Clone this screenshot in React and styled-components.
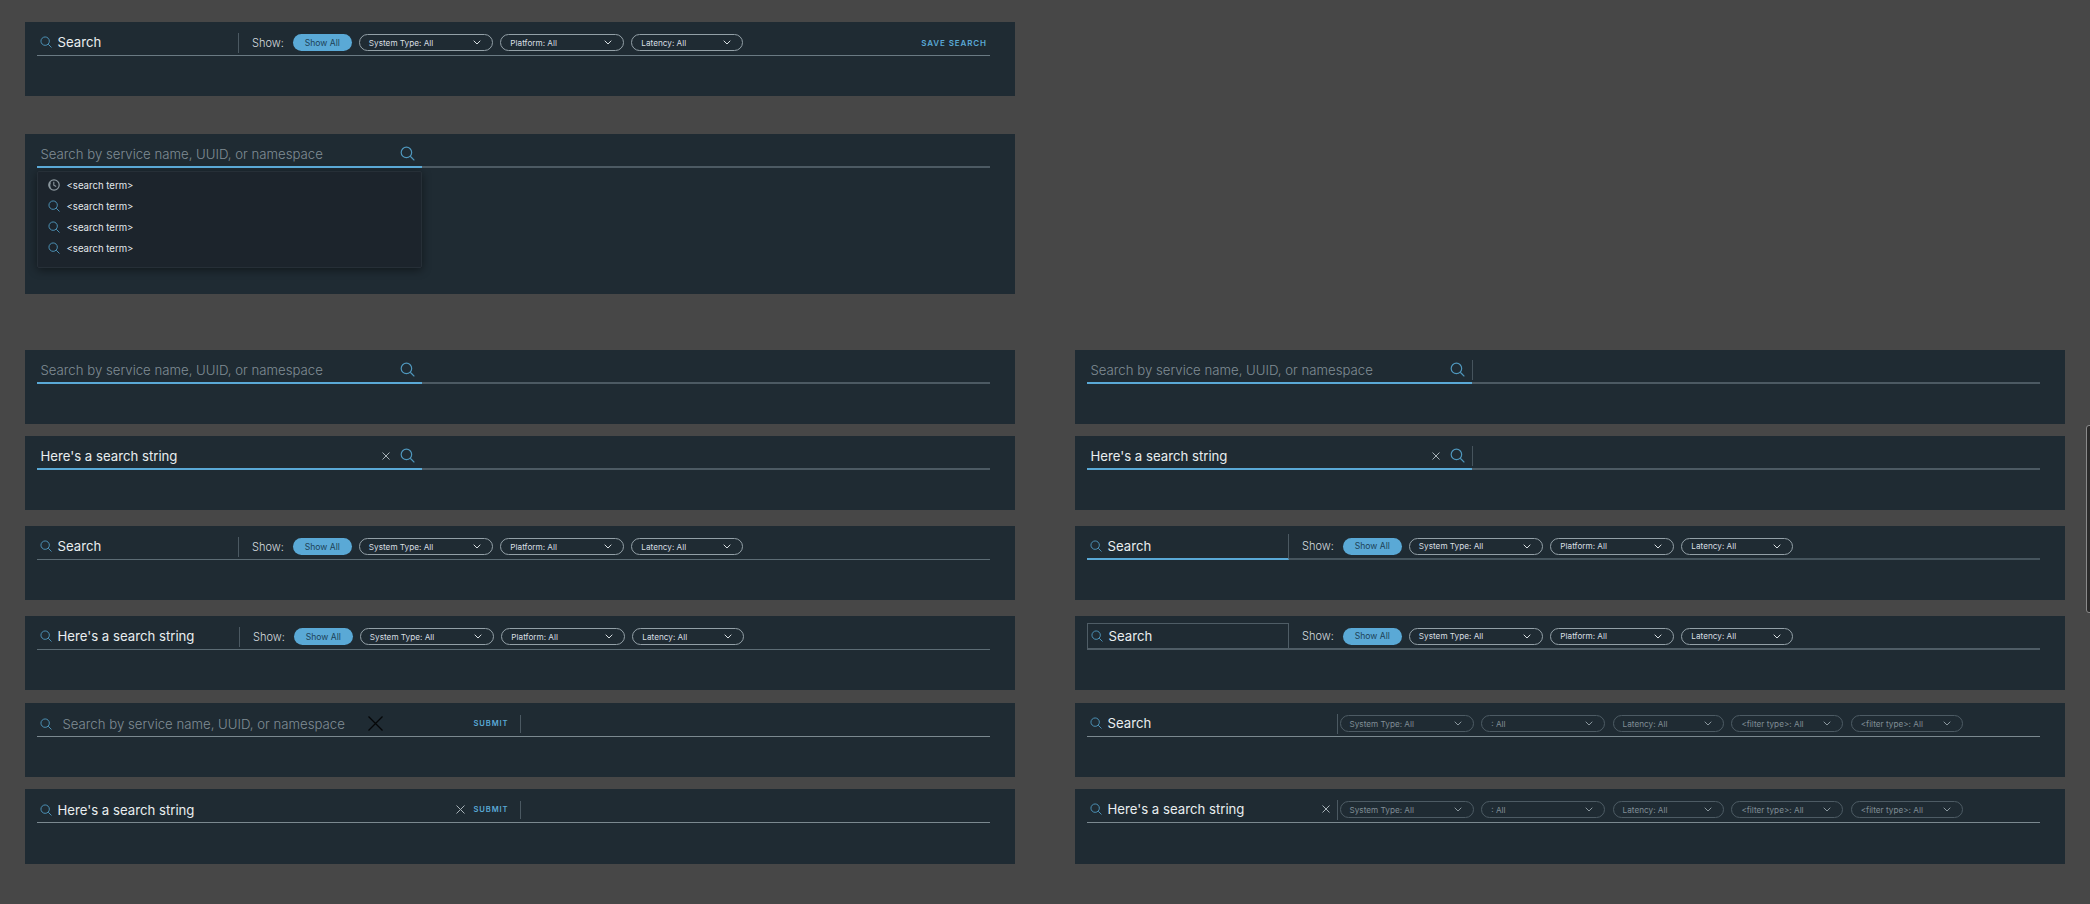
import React from "react";
import styled, { createGlobalStyle } from "styled-components";

const FONT = `Inter, "Liberation Sans", sans-serif`;
const BLUE = "#5aa9d6";
const ICON_BLUE = "#4f97bd";

const GlobalStyle = createGlobalStyle`
  html, body {
    margin: 0;
    padding: 0;
    background: #474747;
    overflow: hidden;
  }
`;

const Page = styled.div`
  position: relative;
  width: 2090px;
  height: 904px;
  padding: 22px 0 0 25px;
  box-sizing: border-box;
  font-family: ${FONT};
  color: #e8edf0;
`;

const Row = styled.div`
  display: flex;
  gap: 60px;
  margin-top: ${(p) => p.$top || 0}px;
`;

const Panel = styled.div`
  width: 990px;
  height: ${(p) => p.$height || 74}px;
  padding: 0 25px 0 11.5px;
  box-sizing: border-box;
  background: #1f2b33;
`;

// the line under every search bar
const Bar = styled.div`
  position: relative;
  display: flex;
  align-items: center;
  height: 34px;
  padding-top: 8px;
  box-sizing: border-box;
  border-bottom: ${(p) => (p.$thick ? 2 : 1)}px solid ${(p) => p.$line || "#5c6c75"};
`;

const InputField = styled.div`
  display: flex;
  align-items: center;
  align-self: flex-end;
  width: 385px;
  height: 27px;
  margin-bottom: -2px;
  padding: 0 7px 0 4px;
  box-sizing: border-box;
  border-bottom: 2px solid ${BLUE};
`;

const LargeText = styled.span`
  font-size: 13.2px;
  font-weight: ${(p) => (p.$placeholder ? 300 : 400)};
  white-space: nowrap;
  color: ${(p) => (p.$placeholder ? "#808d95" : "#e9eef0")};
`;

const Spacer = styled.div`
  flex: 1;
`;

const TallDivider = styled.div`
  width: 1px;
  height: 20px;
  background: #46545d;
`;

const ClearButton = styled.span`
  display: flex;
  margin-right: ${(p) => p.$right || 0}px;
  margin-left: ${(p) => p.$left || 0}px;
`;

const fieldBox = {
  plain: "height: 20px; margin-bottom: 2px; padding: 0 0 2.5px 3px; border-right: 1px solid #4b5962;",
  active: `height: 26px; margin-bottom: -2px; padding: 0 0 0 3px; border-right: 1px solid #4b5962; border-bottom: 2px solid ${BLUE};`,
  boxed: "height: 27px; margin-bottom: -2px; padding: 0 0 1px 3px; border: 1px solid #4f5d66; border-bottom-width: 2px;",
};

const SearchField = styled.div`
  display: flex;
  align-items: center;
  align-self: flex-end;
  flex: none;
  width: ${(p) => p.$width || 202}px;
  box-sizing: border-box;
  ${(p) => fieldBox[p.$variant]}
`;

const FieldText = styled(LargeText)`
  margin-left: ${(p) => p.$left || 6}px;
`;

const ShowLabel = styled.span`
  margin: 0 9px 0 13.5px;
  font-size: 11px;
  font-weight: 300;
  color: #d5dcdf;
`;

const ShowAll = styled.span`
  display: flex;
  align-items: center;
  justify-content: center;
  width: 59px;
  height: 17px;
  margin-right: 7px;
  border-radius: 9px;
  background: ${BLUE};
  color: #1d4258;
  font-size: 8.6px;
`;

const FilterPill = styled.span`
  display: flex;
  flex: none;
  align-items: center;
  justify-content: space-between;
  width: ${(p) => p.$width}px;
  height: 17px;
  padding: 0 11px 0 9px;
  margin-right: ${(p) => p.$gap || 7}px;
  box-sizing: border-box;
  border: 1px solid ${(p) => (p.$dim ? "#4d5b64" : "#93a0a7")};
  border-radius: 9px;
  color: ${(p) => (p.$dim ? "#808d95" : "#d8dfe2")};
  font-size: 8.2px;
  white-space: nowrap;
`;

const TextAction = styled.span`
  color: ${BLUE};
  font-size: ${(p) => p.$size || 8}px;
  font-weight: 600;
  letter-spacing: 0.9px;
  white-space: nowrap;
`;

const SaveAction = styled(TextAction)`
  margin-right: 3px;
`;

const SubmitGroup = styled.div`
  display: flex;
  align-items: center;
  flex: none;
  width: 484px;
  height: 18px;
  margin-top: 1px;
  padding: 0 11px 1px 3px;
  box-sizing: border-box;
  border-right: 1px solid #4b5962;
`;

const FilterOffset = styled.span`
  flex: none;
  width: 2px;
`;

const Menu = styled.div`
  width: 385px;
  height: 97px;
  margin-top: 3px;
  padding: 2.5px 0 0 10px;
  box-sizing: border-box;
  background: #1c242c;
  border: 1px solid #262f37;
  border-radius: 2px;
  box-shadow: 0 2px 10px rgba(0, 0, 0, 0.45);
`;

const MenuItem = styled.div`
  display: flex;
  align-items: center;
  gap: 7px;
  height: 21px;
  font-size: 9.6px;
  color: #e4e9ec;
`;

const ScrollThumb = styled.div`
  position: absolute;
  top: 425px;
  left: 2086px;
  width: 6px;
  height: 188px;
  box-sizing: border-box;
  border: 1px solid #8a8a8a;
  border-radius: 3px 0 0 3px;
  background: #2b2b2b;
`;

const SearchIcon = ({ size = 12 }) => (
  <svg width={size} height={size} viewBox="0 0 14 14" fill="none" style={{ flex: "none" }}>
    <circle cx="6" cy="6" r="4.9" stroke={ICON_BLUE} strokeWidth="1.1" />
    <path d="M9.6 9.6L13.4 13.4" stroke={ICON_BLUE} strokeWidth="1.1" />
  </svg>
);

const ClearIcon = ({ size = 8, color = "#a7b2b8", weight = 1 }) => (
  <svg width={size} height={size} viewBox={`0 0 ${size} ${size}`} fill="none" style={{ flex: "none" }}>
    <path
      d={`M0.5 0.5L${size - 0.5} ${size - 0.5}M${size - 0.5} 0.5L0.5 ${size - 0.5}`}
      stroke={color}
      strokeWidth={weight}
    />
  </svg>
);

const Chevron = ({ dim }) => (
  <svg width="8" height="5" viewBox="0 0 8 5" fill="none" style={{ flex: "none" }}>
    <path d="M0.7 0.7L4 4L7.3 0.7" stroke={dim ? "#8a979e" : "#d8dfe2"} strokeWidth="1" />
  </svg>
);

const ClockIcon = () => (
  <svg width="12" height="12" viewBox="0 0 12 12" fill="none" style={{ flex: "none" }}>
    <circle cx="6" cy="6" r="5.2" stroke="#8b979e" strokeWidth="1.2" />
    <path d="M1.6 3.2A5 5 0 0 0 4 10.8A7 7 0 0 1 3 3.4Z" fill="#8b979e" />
    <path d="M5.8 2.8V6.2L8.2 7.6" stroke="#8b979e" strokeWidth="1.1" />
  </svg>
);

const Filter = ({ label, width, dim, gap }) => (
  <FilterPill $width={width} $dim={dim} $gap={gap}>
    {label}
    <Chevron dim={dim} />
  </FilterPill>
);

const ShowFilters = () => (
  <>
    <ShowLabel>Show:</ShowLabel>
    <ShowAll>Show All</ShowAll>
    <Filter label="System Type: All" width={134.5} />
    <Filter label="Platform: All" width={124} />
    <Filter label="Latency: All" width={112} />
  </>
);

const FilterBar = ({ text = "Search", variant = "plain", width, save, line, thick }) => (
  <Bar $line={line} $thick={thick}>
    <SearchField $variant={variant} $width={width}>
      <SearchIcon />
      <FieldText>{text}</FieldText>
    </SearchField>
    <ShowFilters />
    {save && (
      <>
        <Spacer />
        <SaveAction>SAVE SEARCH</SaveAction>
      </>
    )}
  </Bar>
);

const InputBar = ({ text, divider }) => (
  <Bar $line="#4c5a63" $thick>
    <InputField>
      <LargeText $placeholder={!text}>
        {text || "Search by service name, UUID, or namespace"}
      </LargeText>
      <Spacer />
      {text && (
        <ClearButton $right={10}>
          <ClearIcon />
        </ClearButton>
      )}
      <SearchIcon size={15} />
    </InputField>
    {divider && <TallDivider />}
  </Bar>
);

const SubmitBar = ({ text }) => (
  <Bar $line="#7b8990">
    <SubmitGroup>
      <SearchIcon />
      {text ? (
        <FieldText $left={6}>{text}</FieldText>
      ) : (
        <>
          <FieldText $left={11} $placeholder>
            Search by service name, UUID, or namespace
          </FieldText>
          <ClearButton $left={23}>
            <ClearIcon size={15} color="#050708" weight={1.3} />
          </ClearButton>
        </>
      )}
      <Spacer />
      {text && (
        <ClearButton $right={8}>
          <ClearIcon size={9} />
        </ClearButton>
      )}
      <TextAction $size={7.6}>SUBMIT</TextAction>
    </SubmitGroup>
  </Bar>
);

const DIM_FILTERS = [
  ["System Type: All", 134.5],
  [": All", 124],
  ["Latency: All", 111.5],
  ["<filter type>: All", 112],
  ["<filter type>: All", 112],
];

const CompactBar = ({ text }) => (
  <Bar $line="#7b8990">
    <SearchField $width={251} $variant="plain">
      <SearchIcon />
      <FieldText>{text}</FieldText>
      <Spacer />
      {text !== "Search" && (
        <ClearButton $right={7}>
          <ClearIcon />
        </ClearButton>
      )}
    </SearchField>
    <FilterOffset />
    {DIM_FILTERS.map(([label, width], i) => (
      <Filter key={i} label={label} width={width} dim gap={7.3} />
    ))}
  </Bar>
);

const STRING = "Here's a search string";

export default function App() {
  return (
    <Page>
      <GlobalStyle />
      <Panel>
        <FilterBar save line="#6a7a83" />
      </Panel>
      <Row $top={38}>
        <Panel $height={160}>
          <InputBar />
          <Menu>
            <MenuItem>
              <ClockIcon />
              &lt;search term&gt;
            </MenuItem>
            {[1, 2, 3].map((i) => (
              <MenuItem key={i}>
                <SearchIcon />
                &lt;search term&gt;
              </MenuItem>
            ))}
          </Menu>
        </Panel>
      </Row>
      <Row $top={56}>
        <Panel><InputBar /></Panel>
        <Panel><InputBar divider /></Panel>
      </Row>
      <Row $top={12}>
        <Panel><InputBar text={STRING} /></Panel>
        <Panel><InputBar text={STRING} divider /></Panel>
      </Row>
      <Row $top={16}>
        <Panel><FilterBar /></Panel>
        <Panel><FilterBar variant="active" line="#46555e" thick /></Panel>
      </Row>
      <Row $top={16}>
        <Panel><FilterBar text={STRING} width={203} /></Panel>
        <Panel><FilterBar variant="boxed" line="#4f5d66" thick /></Panel>
      </Row>
      <Row $top={13}>
        <Panel><SubmitBar /></Panel>
        <Panel><CompactBar text="Search" /></Panel>
      </Row>
      <Row $top={12}>
        <Panel $height={75}><SubmitBar text={STRING} /></Panel>
        <Panel $height={75}><CompactBar text={STRING} /></Panel>
      </Row>
      <ScrollThumb />
    </Page>
  );
}
